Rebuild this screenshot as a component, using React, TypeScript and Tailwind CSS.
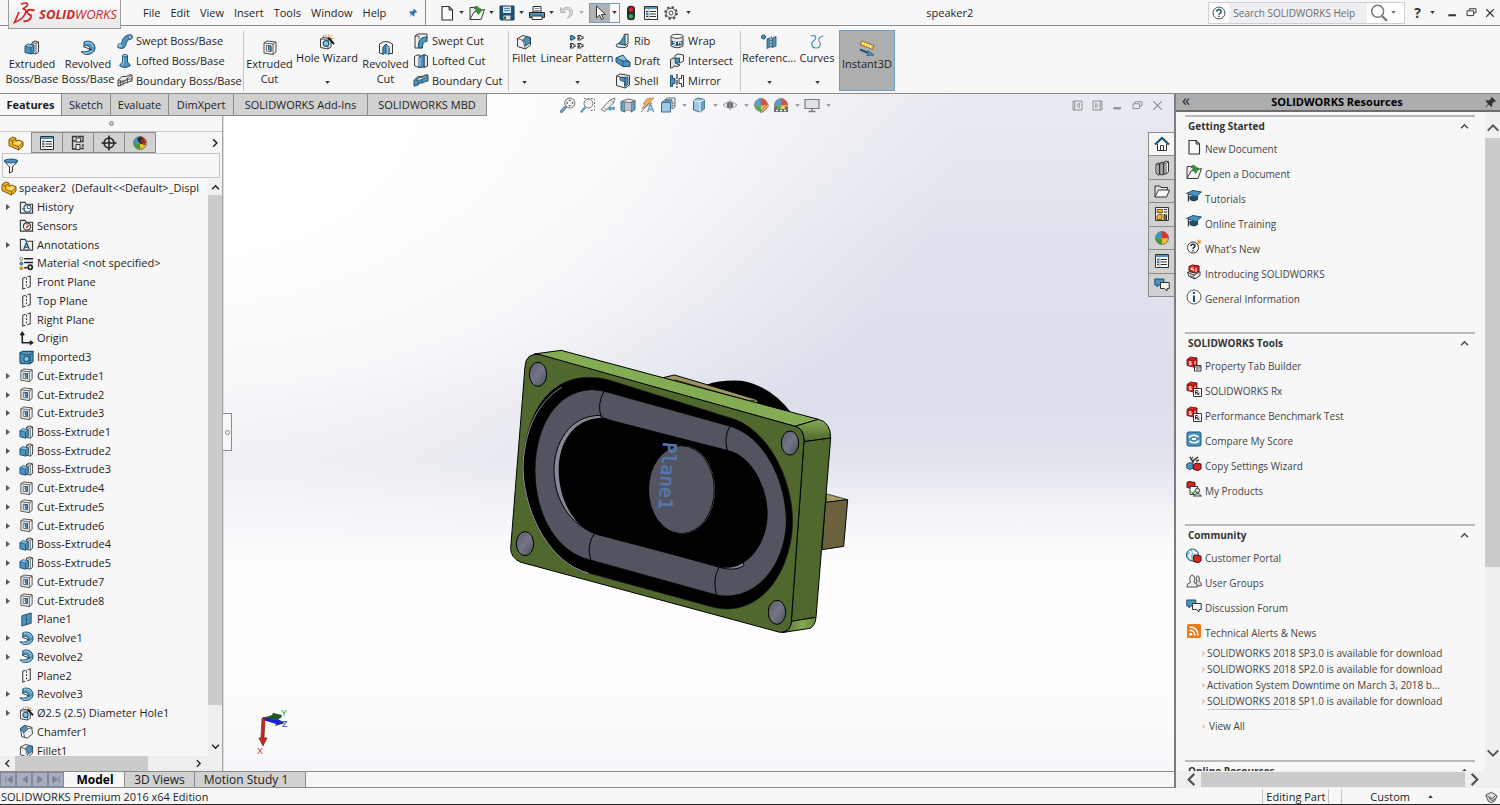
import React, { ReactNode } from "react";

const K = "#3b3b3b";
const B = "#4f93bd";
const L = "#8fc3e0";
const D = "#1d5273";

const sphere = (
  <>
    <circle cx="8" cy="8" r="6.4" fill="#e8c32f" stroke="#555" strokeWidth=".8" />
    <path d="M8 1.6A6.4 6.4 0 0 0 1.6 8L8 8.6Z" fill="#3d8fc7" />
    <path d="M8 1.6A6.4 6.4 0 0 1 14.4 8L8 8.6Z" fill="#d8322a" />
    <path d="M1.6 8A6.4 6.4 0 0 0 8 14.4V8.6Z" fill="#3e9b45" />
  </>
);
const cube = (
  <>
    <path d="M1 3.5 4.5 1 11 2v7l-3.5 2L1 9.5Z" fill="#d3271f" stroke="#5d0d0a" strokeWidth=".8" />
    <path d="M1 3.5 7.5 4.500 11 2M7.500 4.500V11" fill="none" stroke="#6d100d" strokeWidth=".8" />
    <path d="M5.500 5.800H3.300v1.300h2v1.500H3M9 5v3.500" fill="none" stroke="#fff" strokeWidth=".9" />
  </>
);
const folder = <path d="M1.500 14V2.500h5l1 2h7V14Z" fill="#eee" stroke={K} strokeWidth="1.200" />;
const planeOutline = (
  <>
    <path d="M4 3.500 7 2.500M9 2 12 1v11.500L9 13.500M7 14l-3 1V3.500" fill="none" stroke={K} strokeWidth="1.100" />
    <path d="M8 3v10.500" stroke={K} strokeWidth="1.100" strokeDasharray="2 1.500" />
  </>
);

const icons: Record<string, ReactNode> = {
  bossExtrude: (
    <>
      <path d="M8 2.500 11 1l3.500 1v10L12 14 8 13Z" fill="#f4f4f4" stroke={K} />
      <path d="M12 3.500V14M12 3.500l2.500-1.500M12 3.500 8 2.500" stroke={K} fill="none" strokeWidth=".8" />
      <path d="M1 6 4 4l6 1v7l-3 2-6-1.500Z" fill={B} stroke={D} />
      <path d="M1 6 7 7.500 10 5M7 7.500V14" fill="none" stroke={D} strokeWidth=".8" />
      <path d="M1.800 5.900 4 4.600l5 .8L7 6.900Z" fill={L} />
    </>
  ),
  cutExtrude: (
    <>
      <path d="M2 3 5 1l9 1v10l-3 2.500L2 13Z" fill="#f1f1f1" stroke={K} strokeWidth=".9" />
      <path d="M2 3 11 4 14 2M11 4v10.500" fill="none" stroke={K} strokeWidth=".8" />
      <path d="M4.500 5.500 9 6v5.500L4.500 11Z" fill="#fff" stroke={K} strokeWidth=".8" />
      <path d="M6.500 6H9v5L6.500 9.500Z" fill={B} stroke={D} strokeWidth=".8" />
    </>
  ),
  revolve: (
    <>
      <path d="M4 2C9-.5 15 2.500 15 8c0 5-6 7.500-11 6L1 11.500c3 .5 8 .5 9-2.500C10 6 7 5 4 6Z" fill={B} stroke={D} />
      <path d="M5 3c4-1.500 7.500.5 8 4M3.500 12.800c4 .7 8-.5 9.500-3.300" fill="none" stroke={L} strokeWidth="1.500" />
      <path d="M3 6.500 12 10" stroke="#222" strokeWidth=".9" />
    </>
  ),
  sweep: (
    <>
      <path d="M3 13C9 15 5 4 13 4" fill="none" stroke={D} strokeWidth="5.500" strokeLinecap="round" />
      <path d="M3 13C9 15 5 4 13 4" fill="none" stroke={B} strokeWidth="4" strokeLinecap="round" />
      <ellipse cx="3" cy="12.500" rx="2" ry="1.500" fill={L} />
      <ellipse cx="13" cy="4" rx="1.800" ry="2.200" fill={L} stroke={D} strokeWidth=".6" />
    </>
  ),
  loft: (
    <>
      <path d="M5.500 2.500h5V9l3 3.500Q8 16.500 2.500 12.500L5.500 9Z" fill={B} stroke={D} />
      <path d="M6.500 3v7l-2 2.500" stroke={L} fill="none" strokeWidth="1.200" />
      <ellipse cx="8" cy="2.500" rx="2.500" ry="1.200" fill={L} stroke={D} strokeWidth=".7" />
    </>
  ),
  boundary: (
    <>
      <path d="M1 7C4 6 3 3 7 3.500S11 1 15 2v6c-3 0-4 2-7 2S5 13.500 1 13Z" fill="#ededed" stroke={K} />
      <path d="M1 7c2 1 3 1 5 1s4-3 9-6M6 8v4.500M3.500 7.500V13M10.500 5v5M1 10c5 0 9-4 14-4.500" fill="none" stroke={K} strokeWidth=".8" />
    </>
  ),
  boundaryCut: (
    <>
      <path d="M1 7C4 6 3 3 7 3.500S11 1 15 2v6c-3 0-4 2-7 2S5 13.500 1 13Z" fill={B} stroke={D} />
      <path d="M3 7c2-1 3-3 5-2.500s3-2 6-2l-1 2c-3 0-4 2-6 2.500Z" fill="#f3f3f3" stroke={K} strokeWidth=".7" />
      <path d="M5 8v4.500M9 6v3.500" stroke={D} strokeWidth=".8" />
    </>
  ),
  wizard: (
    <>
      <path d="M1.500 5 4 3.500l8 1V13l-3 2-7.500-1.500Z" fill="#f1f1f1" stroke={K} />
      <path d="m1.500 5 7.500 1 3-1.500M9 6v9" fill="none" stroke={K} strokeWidth=".7" />
      <circle cx="7" cy="9.500" r="2.800" fill={L} stroke={D} strokeWidth="1.200" />
      <path d="M9 3.500 15 10" stroke="#222" strokeWidth="2.200" />
      <path d="m4 1.500 1 1M7 .5v2M10 .5l-.5 1.500M12.500 1.500 11.500 3M14.500 4l-1.500.5" stroke="#df8a1c" strokeWidth="1.200" />
    </>
  ),
  revolveCut: (
    <>
      <path d="M1.500 4Q8-1 14.500 4v9.500H11V8L8 4.500 5 8v6L1.500 13Z" fill="#f0f0f0" stroke={K} />
      <path d="M5 14.500V7l3-3v9Z" fill={B} stroke={D} strokeWidth=".8" />
      <path d="M8 4v9l3 1.500V7Z" fill={L} stroke={D} strokeWidth=".8" />
    </>
  ),
  sweptCut: (
    <>
      <path d="M2 3 5 1h9v4L9 8v7H2Z" fill="#efefef" stroke={K} />
      <path d="M5.500 14.500C5 8 7 4 14 4v4.500C10 8.500 9.500 11 9.500 15Z" fill={B} stroke={D} />
      <path d="M2 3h4M6 3v3" stroke={K} strokeWidth=".8" />
    </>
  ),
  loftedCut: (
    <>
      <path d="M1.500 3.500 4 2h3v12H4l-2.500-1.500Z" fill="#f0f0f0" stroke={K} />
      <path d="M11 1.500 14.500 3v10L11 14.500Z" fill="#e2e2e2" stroke={K} />
      <path d="M6 4 11 1.500V14L6 14.500Z" fill={B} stroke={D} />
      <path d="M7 5v8" stroke={L} strokeWidth="1.500" />
    </>
  ),
  fillet: (
    <>
      <path d="M1.500 4.500 7 1.500l7.500 2V11l-5 4-8-2.500Z" fill="#f1f1f1" stroke={K} />
      <path d="M7 6.500C7 4 10 2.500 14 3.500V9L9.500 12C9.500 9 9 7 7 6.500Z" fill={B} stroke={D} strokeWidth=".8" />
      <path d="M1.500 4.500 7 6.500 9.500 15" fill="none" stroke={K} strokeWidth=".8" />
    </>
  ),
  pattern: (
    <>
      <path d="M1.500 1.500h2.300Q4 3 6 3v1.500Q4 4.500 3.800 6H1.500Z" fill={B} stroke={D} />
      <path d="M9 1.500h2.500Q11.700 3 14 3v1.500q-2.300 0-2.500 1.500H9V4.500h1.300V3H9ZM1.500 9.500h2.300Q4 11 6 11v1.500q-2 0-2.200 1.500H1.500v-1.500h1V11h-1ZM9 9.500h2.500q.2 1.500 2.500 1.500v1.500q-2.300 0-2.500 1.500H9v-1.500h1.300V11H9Z" fill="#fff" stroke="#333" strokeWidth="1.100" />
    </>
  ),
  rib: (
    <>
      <path d="M1 12 4 10l7 1 2 2-3 1.500L2 14Z" fill="#f4f4f4" stroke={K} />
      <path d="M9 1.500 13 1v9.500l-3 2Z" fill="#e9e9e9" stroke={K} />
      <path d="M3.500 11C6 9 7 5 10 2.500V12Z" fill={B} stroke={D} />
    </>
  ),
  draft: (
    <>
      <path d="M1 5 8 2l3 4 4 3v4.500H8L1 9Z" fill={B} stroke={D} />
      <path d="M1 5 8 8l7 1M8 8v5.500" fill="none" stroke={D} strokeWidth=".8" />
      <path d="M2.500 5 8 2.700l3 4.300-3 .2Z" fill={L} />
    </>
  ),
  shell: (
    <>
      <path d="M1.500 3 5 1l9.500 1.500V12L10 15 1.500 12.500Z" fill="#f0f0f0" stroke={K} />
      <path d="M5 4.500 13 4v7.500L9.500 13V9L5 7Z" fill={B} stroke={D} strokeWidth=".8" />
      <path d="M1.500 3 10 5v10" fill="none" stroke={K} strokeWidth=".8" />
    </>
  ),
  wrap: (
    <>
      <path d="M2 3.500v9.500Q8 16.500 14 13V3.500" fill="#ececec" stroke={K} />
      <ellipse cx="8" cy="3.300" rx="6" ry="2" fill="#fff" stroke={K} />
      <path d="M2.500 7.500Q8 10 13.500 7.500v4.200Q8 14 2.500 11.700Z" fill={D} />
      <path d="M4 9.300h2.500v2H4M9.500 11.300V9.200h2.500v2" stroke="#fff" fill="none" />
    </>
  ),
  intersect: (
    <>
      <path d="M6 2.500 9 1l5.500 1v6L11 10 6 8.500Z" fill="#f2f2f2" stroke={K} />
      <path d="M1.500 6.500 4 5l4 .5V11l3 1-2 1.500-4-.5-1.500 2H1.500Z" fill="#ddd" stroke={K} />
      <path d="M6 5.500 10.500 5v4.500l-4 1Z" fill={B} stroke={D} />
    </>
  ),
  mirror: (
    <>
      <path d="M1.500 2.500h2v3h2.500v5H3.500v3h-2Z" fill={B} stroke={D} />
      <path d="M8 1v14" stroke="#222" strokeWidth="1.100" strokeDasharray="5 1" />
      <path d="M14.500 2.500h-2v3H10v5h2.500v3h2Z" fill="#fff" stroke="#333" />
    </>
  ),
  reference: (
    <>
      <circle cx="2.500" cy="3" r="2" fill={B} stroke={D} />
      <path d="M6 5 9 4v9l-3 1.500ZM11.500 4 15 2.500V12l-3.500 1.500Z" fill={B} stroke={D} strokeWidth=".8" />
      <path d="M10.300 2.500v12" stroke="#333" strokeDasharray="2 1" />
    </>
  ),
  curves: <path d="M1.500 2C8 0 7.500 5 4.500 7s-2 7 2.500 7 5-4 3.500-6-1-6 4-6" fill="none" stroke={B} strokeWidth="1.200" />,
  instant: (
    <>
      <path d="M1 4.500 3 1l12 4.500-1.500 4Z" fill="#f3c83d" stroke="#8a5a12" strokeWidth=".8" />
      <path d="m4 2 .0 2.500M6.500 3v2.500M9 4v2.500M11.500 5v2.500" stroke="#fff" />
      <path d="m1 9.500 9.500 4" stroke={D} strokeWidth="2" />
      <path d="m9 10.500 6 4.500-7 .5Z" fill={B} stroke={D} strokeWidth=".7" />
    </>
  ),
  newDoc: (
    <>
      <path d="M3 1.500h7L13.500 5v10H3Z" fill="#fafafa" stroke="#333" strokeWidth="1.100" />
      <path d="M10 1.500V5h3.500" fill="none" stroke="#333" />
    </>
  ),
  open: (
    <>
      <path d="M1 14.500V2.500h4l1 1.500h6V7" fill="#eee" stroke={K} />
      <path d="M1 14.500 5 7l10.500-2.500L12 14.500Z" fill="#f6f6f6" stroke={K} />
      <path d="M5 2.500c2-2 5-1.500 5.500 2.500H13L9.500 9.500 6.500 5h2C8 3.500 7 3 5 2.500Z" fill="#2f9c2f" stroke="#17631a" strokeWidth=".5" />
    </>
  ),
  save: (
    <>
      <path d="M1 1h14v14H2l-1-1Z" fill={D} stroke="#163b54" />
      <path d="M4 1.500h8V8H4Z" fill="#cfe2ee" />
      <path d="M5 3.500h6M5 5.500h6" stroke={B} />
      <path d="M4.500 10.500h7v4h-7Z" fill="#ddd" />
      <path d="M6 11.500v2.500" stroke="#222" strokeWidth="1.500" />
    </>
  ),
  print: (
    <>
      <path d="M4 7V1.500h8V7Z" fill="#fff" stroke="#333" />
      <path d="M5.500 3.500h5M5.500 5.500h5" stroke="#888" />
      <path d="M.500 7.500h15v5H.500Z" fill={B} stroke="#222" />
      <path d="M3 11h10v3.500H3Z" fill="#fff" stroke="#333" />
    </>
  ),
  undo: <path d="M1.500 2.500v5h5l-2-2c3-2 6.500-1 6.500 2.500 0 2-1 3.500-3 5 4-1 6-3.500 5.500-6.500C13 2.500 7.500.500 3.500 4.200Z" fill="#d7d7d7" stroke="#a9a9a9" strokeWidth=".8" />,
  cursor: <path d="M4.500 1v12l3-3 2 4.500 2-1L9.500 9.500h4Z" fill="#fff" stroke="#333" />,
  light: (
    <>
      <rect x="4" y=".8" width="8" height="14.400" rx="3.500" fill="#2c2c2c" />
      <circle cx="8" cy="4.500" r="2.200" fill="#e0271f" />
      <circle cx="8" cy="11.300" r="2.200" fill="#3aa840" />
    </>
  ),
  list: (
    <>
      <path d="M1.500 1.500h13v13h-13Z" fill="#fff" stroke="#333" />
      <path d="M2 3h12" stroke={B} strokeWidth="2" />
      <path d="M3 6.500h2M3 9h2M3 11.500h2" stroke={D} strokeWidth="1.500" />
      <path d="M6.500 6.500h6.500M6.500 9h6.500M6.500 11.500h6.500" stroke="#333" />
      <path d="M5.800 4v10" stroke="#777" strokeWidth=".6" />
    </>
  ),
  gear: (
    <>
      <circle cx="8" cy="8" r="6" fill="none" stroke="#444" strokeWidth="1.600" strokeDasharray="2.400 2.300" />
      <circle cx="8" cy="8" r="4.800" fill="#f7f7f7" stroke="#444" />
      <circle cx="8" cy="8" r="2" fill="#fff" stroke="#444" />
    </>
  ),
  zoomFit: (
    <>
      <path d="m1.500 14.500 4-4.500" stroke={D} strokeWidth="3" strokeLinecap="round" />
      <path d="m1.500 14.500 4-4.500" stroke={B} strokeWidth="2" strokeLinecap="round" />
      <circle cx="9.800" cy="6" r="5" fill="#f4f4f4" stroke="#555" />
      <path d="M9.800 2.200 11.300 4h-3ZM9.800 9.800 11.300 8h-3ZM6 6l1.800-1.500v3ZM13.600 6l-1.800-1.500v3Z" fill="#444" />
    </>
  ),
  zoomArea: (
    <>
      <path d="M4 1.500h10.500v12H9" fill="none" stroke="#666" strokeDasharray="2 1.500" />
      <path d="m1.500 14.500 4-4.500" stroke={B} strokeWidth="2.600" strokeLinecap="round" />
      <circle cx="8.500" cy="6.500" r="4.500" fill="#f0f3f6" stroke="#666" />
    </>
  ),
  prevView: (
    <>
      <path d="M1 12.500 10 3l5-2-1.500 5L5 14.500Z" fill="#eee" stroke="#666" />
      <path d="M4 10.500 7 13M10 3l3.500 3" stroke="#666" strokeWidth=".8" />
      <path d="M7 11.500 10.500 8.500V10H15v3h-4.500v1.500Z" fill={B} />
    </>
  ),
  section: (
    <>
      <path d="M1 4.500 5 5v10l-4-1.500Z" fill={B} stroke={D} />
      <path d="M11 5.500 15 3.500v9L11 15Z" fill={B} stroke={D} />
      <path d="M5 5h6v8.500H5Z" fill="#d9dde0" stroke="#777" strokeWidth=".7" />
      <path d="M1 4.500 8 2l7 1.500L11 5.500 5 5Z" fill="#ededed" stroke="#555" />
      <path d="M7 6v7M9 6v7" stroke="#888" strokeWidth=".8" />
    </>
  ),
  annot: (
    <>
      <path d="M7 1.500 14 1 9 6h3L2 12l3-5H3Z" fill="#eba14a" stroke="#a7682a" strokeWidth=".7" />
      <path d="M1 15 9 6" stroke="#666" />
      <path d="m7.500 15 3-8 3 8M8.500 12.500h4" fill="none" stroke={B} strokeWidth="1.500" />
    </>
  ),
  viewOri: (
    <>
      <path d="M5 3 7 1h8v9l-3 2V3Z" fill="#f3f3f3" stroke="#555" />
      <path d="M1.500 5.500h9V15h-9Z" fill={L} stroke={D} />
      <path d="m1.500 5.500 3-2.500H12l-1.500 2.500ZM12 6h3M12 8.500h3" fill={B} stroke={D} strokeWidth=".7" />
    </>
  ),
  display: (
    <>
      <path d="M2.500 3.500 7 1l6.500 1.500V12L9 15l-6.500-2Z" fill={L} stroke={D} />
      <path d="M9 5v10l4.500-3V2.500Z" fill={B} />
      <path d="M2.500 3.500 9 5l4.500-2.500M9 5v10" fill="none" stroke="#f6f6f6" />
    </>
  ),
  eye: (
    <>
      <path d="M1 8Q8 1.500 15 8 8 14.500 1 8Z" fill="#eee" stroke="#888" />
      <circle cx="8" cy="8" r="3.200" fill="#555" />
      <path d="M8 2.500v11" stroke="#999" />
    </>
  ),
  sphere,
  spherePen: (
    <>
      {sphere}
      <path d="m8 14 6-7 2 1.500-6 6.500-2.500.5Z" fill="#e8a55a" stroke="#7a4516" strokeWidth=".7" />
    </>
  ),
  sphereFloor: (
    <>
      {sphere}
      <path d="M1 15V10l3-1v3h8V9l3 1v5Z" fill="#555" />
      <path d="M3 13.500h2M7 13.500h2M11 13.500h2" stroke="#fff" strokeWidth="1.500" />
    </>
  ),
  sphereTree: (
    <>
      {sphere}
      <path d="M5 4 8 1.500l3 2L13.500 10 8 8.500Z" fill="#2b2b2b" />
      <path d="M9.500 4.500 12 9.500" stroke="#d8322a" strokeWidth="1.500" />
    </>
  ),
  monitor: (
    <>
      <path d="M1 2.500h14v9H1Z" fill="#dfe2e5" stroke="#666" strokeWidth="1.200" />
      <path d="M8 12v2.500M4.500 14.500h7" stroke="#666" strokeWidth="1.500" />
    </>
  ),
  part: (
    <>
      <path d="M1 4.500 4.500 2 8 3.200v3L10.500 5l4.500 2v4L10.500 15 1 10.500Z" fill="#efb428" stroke="#7b5206" />
      <path d="m1 4.500 3.500 1.300v3.700l6 2.200L15 7.500M10.500 11.700V15M4.500 5.800 8 3.500" fill="none" stroke="#7b5206" strokeWidth=".8" />
      <path d="m5 9 3-2 2.500-1L14 7.500l-3.500 3Z" fill="#fbdb72" />
    </>
  ),
  config: (
    <>
      <path d="M2.500 1v13h4M2.500 6h3M2.500 1.500h5" fill="none" stroke="#333" strokeWidth="1.300" />
      <path d="M6 3h4.500v4H6ZM6 9.500h4v5H6Z" fill="#eee" stroke="#333" />
      <path d="M8 1.500h5v5h-2.500M13 9v3M10.500 13.500H14" fill="none" stroke="#333" strokeWidth="1.300" />
    </>
  ),
  target: (
    <>
      <circle cx="8" cy="8" r="5" fill="none" stroke="#222" strokeWidth="1.500" />
      <path d="M8 .5v15M.5 8h15" stroke="#222" strokeWidth="1.500" />
    </>
  ),
  filter: (
    <>
      <path d="M1.500 3.500 6.500 9v6l3-1.500V9l5-5.500Z" fill="#eee" stroke="#333" />
      <ellipse cx="8" cy="3" rx="6.800" ry="1.900" fill={B} stroke={D} />
    </>
  ),
  history: (
    <>
      {folder}
      <circle cx="9" cy="9" r="3.800" fill="#fff" stroke={D} strokeWidth="1.100" />
      <path d="M9 6.500V9h2.500M3 8.500l2 2 1.500-2" fill="none" stroke={D} />
    </>
  ),
  sensor: (
    <>
      {folder}
      <circle cx="8.500" cy="9" r="3.800" fill="#fff" stroke="#333" strokeWidth="1.100" />
      <path d="M6.500 8a3 3 0 0 1 3-1.500" fill="none" stroke={B} />
      <path d="m7.500 10.500 3-3" stroke="#d4471d" strokeWidth="1.800" />
    </>
  ),
  annotations: (
    <>
      {folder}
      <path d="m5 13 3-7 3 7M6 10.800h4" fill="none" stroke={D} strokeWidth="1.400" />
    </>
  ),
  material: (
    <>
      <circle cx="2.500" cy="3" r="1.600" fill="#fff" stroke="#555" strokeWidth=".8" />
      <circle cx="2.500" cy="8" r="1.600" fill={B} stroke={D} strokeWidth=".8" />
      <circle cx="2.500" cy="13" r="1.600" fill="#f0b223" stroke="#96690d" strokeWidth=".8" />
      <path d="M5.500 3H15M5.500 7H15M5.500 12.500H9" stroke="#222" strokeWidth="1.600" />
      <circle cx="12" cy="12" r="2.200" fill="#fff" stroke="#222" strokeWidth="1.800" />
    </>
  ),
  plane: planeOutline,
  planeBlue: (
    <>
      <path d="M3 4 13 1v11L3 15Z" fill={B} stroke={D} />
      <path d="M8 2.500v11" stroke={D} strokeWidth="1.200" strokeDasharray="3 1" />
    </>
  ),
  origin: <path d="M3.500 2v10.500H14M1.500 4.500l2-3 2 3M11.500 10.500l3 2-3 2" fill="none" stroke="#222" strokeWidth="1.700" />,
  imported: (
    <>
      <path d="M1 3 4 1.500h11V12l-3 2.500H2L1 13Z" fill={B} stroke={D} strokeWidth="1.200" />
      <path d="M1 3.500 4 5h8l3-3M12 5v9" fill="none" stroke={D} />
      <circle cx="8" cy="9.500" r="2.800" fill={L} stroke={D} strokeWidth="1.200" />
    </>
  ),
  chamfer: (
    <>
      <path d="M1.500 5 6 1.500l7.500 2 1 7L9 15l-6-1.500Z" fill="#f1f1f1" stroke={K} />
      <path d="M1.500 5 6 1.500 9.500 5 5 9.500Z" fill={B} stroke={D} />
      <path d="m5 9.500 1 4.500M9.500 5l5-1" stroke={K} strokeWidth=".7" />
    </>
  ),
  home: (
    <>
      <path d="M3.500 8v6.500h9V8" fill="#fff" stroke="#333" />
      <path d="M1 8.500 8 2l7 6.500" fill="none" stroke={D} strokeWidth="2.200" />
      <path d="M6.500 14V9.500h3V14" fill="none" stroke="#333" />
    </>
  ),
  library: (
    <>
      <path d="M2 4.500 4 3l2 .5v11l-2 .5-2-2ZM5.500 3.500 8 2l2 .500V14l-2 1-2.500-1ZM9.500 2.500 12 1l2.500.800V12L12 14H9.500Z" fill="#f2f2f2" stroke="#333" />
      <path d="M4 5v10M8 4v11M12 3.500V14M2 4.500 4 5l2-1.500M5.500 3.500 8 4l2-1.500M9.500 2.500l2.500 1 2.500-1.700" stroke="#333" strokeWidth=".8" fill="none" />
    </>
  ),
  folderOpen: (
    <>
      <path d="M1 14V3h5l1 1.500h6.500V7" fill="#ddd" stroke="#333" />
      <path d="M1 14 4.500 7H15.500L12.500 14Z" fill="#fafafa" stroke="#333" />
    </>
  ),
  palette: (
    <>
      <path d="M1.500 1.500h13v13h-13Z" fill="#eee" stroke="#333" />
      <path d="M3 3.500h5.500v3H3ZM3 10l2-2h3v5.500H3Z" fill="#efb428" stroke="#6d4a07" strokeWidth=".8" />
      <path d="M10 3.500h3M10 6h3M10 8.500h1.200v5H10ZM12.500 8.500V14" stroke="#333" fill="#efb428" />
    </>
  ),
  chat: (
    <>
      <path d="M.8 2h9v6H5L3 10V8H.8Z" fill={B} stroke={D} />
      <path d="M6.500 5.500h8.700v6H13v2.500L10.500 11.500h-4Z" fill="#f4f4f4" stroke="#333" />
    </>
  ),
  cap: (
    <>
      <path d="M4 7v3.500q4 3 7.500 0V7" fill={D} stroke="#173b52" />
      <path d="M.5 4.500 7 1.500 15.500 3 10 7.500Z" fill={B} stroke={D} />
      <path d="M2.500 5.500v7" stroke="#333" strokeWidth="1.300" />
    </>
  ),
  whatsNew: (
    <>
      <circle cx="7" cy="8.500" r="5.500" fill="#fff" stroke="#333" />
      <path d="M5 7c0-2.500 4-2.500 4 0 0 1.500-2 1.300-2 3M7 11v1.300" fill="none" stroke="#222" strokeWidth="1.500" />
      <path d="M13 .5v5M10.500 3h5M11.300 1.300l3.400 3.400M14.700 1.300l-3.400 3.400" stroke="#ea8c1b" strokeWidth=".9" />
    </>
  ),
  intro: (
    <>
      <path d="M3 2.500 6.500 1 13 2v5l-4 2-6-1.500Z" fill="#d3271f" stroke="#5d0d0a" />
      <path d="M7.500 4H5v1.500h2.500V7M10 4v4" fill="none" stroke="#fff" />
      <path d="M1.500 8 4 9.500l4 1.500 6-3.500v4L9 15l-6-2.500Z" fill="#eee" stroke="#333" />
      <path d="M8 11v4M4 11.500 7 13" stroke="#333" strokeWidth=".8" />
    </>
  ),
  info: (
    <>
      <circle cx="8" cy="8" r="7" fill="#fff" stroke="#555" />
      <path d="M8 3v2M8 6.500V13" stroke={D} strokeWidth="2.200" />
    </>
  ),
  cubeTab: (
    <>
      {cube}
      <path d="M8.500 9.500h6.500v5.500H8.500Z" fill="#fff" stroke="#333" />
      <path d="M8.500 11h6.500M10 13h3.500" stroke="#333" />
    </>
  ),
  cubeRx: (
    <>
      {cube}
      <path d="M7.500 7.500h8V15.500h-8Z" fill="#fff" stroke="#333" />
      <path d="M9.500 13.500v-4h2q1.200 1 0 2h-2l4 2.500M13.500 11.500l-2 2.500" fill="none" stroke="#222" strokeWidth=".9" />
    </>
  ),
  compare: (
    <>
      <rect x="1" y="1" width="14" height="14" rx="1.500" fill={B} stroke={D} />
      <path d="M3 6.500c2-3 7-3 9.500-.5M13 9.500c-2 3-7 3-9.500.5" fill="none" stroke="#fff" strokeWidth="1.600" />
      <path d="M6 8h4" stroke="#fff" strokeWidth="2" />
    </>
  ),
  copySet: (
    <>
      <path d="M.8 8 4 6.500l3 1V12l-3 1.500L.800 12Z" fill={B} stroke={D} />
      <path d="M7.500 8.500 10.500 7l4.500 1v5l-3 1.500-4.500-1Z" fill="#d3271f" stroke="#5d0d0a" />
      <path d="M4 1l3 5 1-2 4-3M6 1.500h1M10 5l3-1" fill="none" stroke="#333" strokeWidth="1.500" />
    </>
  ),
  products: (
    <>
      <path d="M1 1.500 3 .5l6 1v5l-3 1-5-1Z" fill="#d3271f" stroke="#5d0d0a" />
      <path d="M4 5.500h7.500V13.500H4Z" fill="#fff" stroke="#333" />
      <path d="m5.500 11 1.500 1.500 2-2.500" fill="none" stroke="#2f9c2f" strokeWidth="1.300" />
      <circle cx="11.500" cy="9.500" r="2.200" fill="#ddd" stroke="#444" />
      <path d="M7.500 15q4-5 8 0Z" fill="#ddd" stroke="#444" />
    </>
  ),
  portal: (
    <>
      <circle cx="6.500" cy="7" r="6" fill={L} stroke={D} />
      <path d="M3 3c3 1 2 3 0 5l2 3M8 2c-2 2 1 3 3 3" fill="none" stroke="#fff" strokeWidth="1.800" />
      <path d="M7.500 8 10 7l5 1v5l-3 1.800-4.500-1.300Z" fill="#d3271f" stroke="#5d0d0a" />
    </>
  ),
  users: (
    <>
      <path d="M8 13.500q.5-4 3-4.500-2-5 .5-6 3 .2 1.500 5 2.500 1 2.500 4.500Z" fill="#d8d8d8" stroke="#555" />
      <path d="M.8 14q0-4 3.700-4.500Q2.500 3.500 6 2q4 1 2 7.500Q11.500 10 11.500 14Z" fill="#efefef" stroke="#555" />
    </>
  ),
  rss: (
    <>
      <rect x="1" y="1" width="14" height="14" rx="1.500" fill="#ea7a1d" />
      <circle cx="4.700" cy="11.300" r="1.400" fill="#fff" />
      <path d="M3.500 7.300q5 0 5.200 5.200M3.500 4q8.300 0 8.500 8.500" fill="none" stroke="#fff" strokeWidth="1.500" />
    </>
  ),
  help: (
    <>
      <circle cx="8" cy="8" r="6.800" fill="#fff" stroke="#333" />
      <path d="M5.500 6.500c0-3.500 5-3.500 5 0 0 2-2.500 1.500-2.500 3.500M8 11v1.600" fill="none" stroke={D} strokeWidth="1.700" />
    </>
  ),
  search: (
    <>
      <circle cx="6.800" cy="6.500" r="5.300" fill="none" stroke="#777" strokeWidth="1.300" />
      <path d="m10.500 10.500 4.500 4.500" stroke="#777" strokeWidth="2" />
    </>
  ),
  pin: <path d="m9.500 1 5.500 5.500-1.500.5-.8-.3-2.700 2.800.3 3-1.300 1-3-3L1 15l4-5.500-3-3 1-1.200 3 .3L9 3l-.3-1Z" fill="currentColor" />,
  min: <path d="M2 12h11" stroke="currentColor" strokeWidth="3" />,
  restore: <path d="M5 5V2.500h9.500v6H11M1.500 5.500H11v7H1.500Z" fill="none" stroke="currentColor" strokeWidth="1.400" />,
  close: <path d="m2 2 12 12M14 2 2 14" stroke="currentColor" strokeWidth="1.700" />,
  dockL: <path d="M1.500 1.500h13v13h-13ZM4 1.500v13M10.500 4.500 7 8l3.500 3.500Z" fill="none" stroke="currentColor" strokeWidth="1.400" />,
  dockR: <path d="M1.500 1.500h13v13h-13ZM12 1.500v13M5.500 4.500 9 8l-3.500 3.500Z" fill="none" stroke="currentColor" strokeWidth="1.400" />,
  up: <path d="m2 11 6-6 6 6" fill="none" stroke="currentColor" strokeWidth="2.400" />,
  down: <path d="m2 5 6 6 6-6" fill="none" stroke="currentColor" strokeWidth="2.400" />,
  left: <path d="M11 2 5 8l6 6" fill="none" stroke="currentColor" strokeWidth="2.400" />,
  right: <path d="m5 2 6 6-6 6" fill="none" stroke="currentColor" strokeWidth="2.400" />,
  tag: (
    <>
      <path d="M1 5 8 1.500 15 6l-3 6-4 2.500-4-2Z" fill="#ddd" stroke="#333" />
      <path d="m3 6.500 6 3 4-4M5 9l4 3 4-3" fill="none" stroke="#333" />
    </>
  ),
};

const Icon = ({ n, c = "size-4" }: { n: string; c?: string }) => (
  <svg viewBox="0 0 16 16" className={`block shrink-0 ${c}`} aria-hidden="true">
    {icons[n]}
  </svg>
);
const Caret = ({ c = "text-[#333]" }: { c?: string }) => (
  <svg viewBox="0 0 6 4" className={`block h-[3px] w-[5px] shrink-0 ${c}`} aria-hidden="true">
    <path d="M0 0h6L3 4Z" fill="currentColor" />
  </svg>
);

const menus = ["File", "Edit", "View", "Insert", "Tools", "Window", "Help"];

function TitleBar() {
  return (
    <header className="relative flex h-[26px] shrink-0 items-center border-b border-[#8b8b8b] pl-[143px]">
      <div className="absolute top-0 left-2 z-10 flex h-[29px] w-[113px] items-center border border-t-0 border-[#9c9c9c] bg-linear-to-b from-[#fbfbfb] to-[#e9e9e9] pb-1 pl-1">
        <svg viewBox="0 0 22 23" className="h-[23px] w-[22px] shrink-0" aria-hidden="true">
          <path d="M8 3.200Q15 .5 14.500 4 13.500 6.500 9.500 7.800 14 8 12.500 12 10 18.500 1.500 21.500L6 11" fill="none" stroke="#d0282b" strokeWidth="1.700" />
          <path d="M21.500 9.500Q13.500 7.500 14 11.500 14.500 13 18 14.500 18.500 20 10.500 20.500" fill="none" stroke="#d0282b" strokeWidth="2" />
        </svg>
        <span className="pt-1 pl-1 text-[13px] leading-4 text-[#d0282b] italic"><b>SOLID</b>WORKS</span>
      </div>
      <nav className="flex gap-[10px]">
        {menus.map((m) => <button key={m}>{m}</button>)}
      </nav>
      <button aria-label="Pin menu" className="ml-[22px] text-[#2f74b5]"><Icon n="pin" c="size-[10px]" /></button>
      <div className="ml-[7px] flex h-[25px] items-center border-l border-[#8b8b8b] pl-[13px]">
        {["newDoc", "open", "save", "print", "undo"].map((n) => (
          <React.Fragment key={n}>
            <button aria-label={n}><Icon n={n} /></button>
            <span className="mr-[5px] ml-1"><Caret c={n === "undo" ? "text-[#aaa]" : "text-[#333]"} /></span>
          </React.Fragment>
        ))}
        <div className="flex h-5 items-center border border-[#6d9fc4]">
          <button aria-label="Select" className="flex h-full w-5 items-center justify-center bg-[#b0b2b4]"><Icon n="cursor" /></button>
          <button aria-label="Select options" className="flex h-full w-[9px] items-center justify-center"><Caret /></button>
        </div>
        <button aria-label="Rebuild" className="ml-[3px]"><Icon n="light" /></button>
        <button aria-label="File properties" className="ml-1"><Icon n="list" /></button>
        <button aria-label="Options" className="mr-[7px] ml-1"><Icon n="gear" /></button>
        <Caret />
      </div>
      <div className="flex-1 text-center">speaker2</div>
      <div className="flex h-[22px] w-[197px] items-center border border-[#cfcfcf] bg-white">
        <span className="px-[3px]"><Icon n="help" c="size-[14px]" /></span>
        <input aria-label="Search help" placeholder="Search SOLIDWORKS Help" className="h-full w-[138px] min-w-0 bg-[#edeff3] pl-1 text-[10px] placeholder:text-[#6d6d6d]" />
        <button aria-label="Search" className="mx-[3px]"><Icon n="search" c="size-[18px]" /></button>
        <Caret c="text-[#777]" />
      </div>
      <button aria-label="Help" className="ml-[9px] text-sm font-bold text-[#333]">?</button>
      <span className="ml-[9px]"><Caret /></span>
      <div className="mr-[5px] ml-[12px] flex gap-2 text-[#333]">
        <button aria-label="Minimize"><Icon n="min" c="size-[11px]" /></button>
        <button aria-label="Restore"><Icon n="restore" c="size-[11px]" /></button>
        <button aria-label="Close"><Icon n="close" c="size-[10px]" /></button>
      </div>
    </header>
  );
}

const Big = ({ n, lines, w }: { n: string; lines: string[]; w: string }) => (
  <button className={`flex h-full flex-col items-center pt-[9px] leading-[15px] whitespace-nowrap ${w}`}>
    <Icon n={n} />
    {lines.map((l) => <span key={l}>{l}</span>)}
  </button>
);
const Drop = ({ n, label, w }: { n: string; label: string; w: string }) => (
  <button className={`flex h-full flex-col items-center pt-[3px] pb-[7px] leading-[15px] whitespace-nowrap ${w}`}>
    <Icon n={n} />
    <span>{label}</span>
    <span className="mt-auto"><Caret /></span>
  </button>
);
const Stack = ({ items, w }: { items: [string, string][]; w: string }) => (
  <div className={`flex flex-col ${w}`}>
    {items.map(([n, l]) => (
      <button key={l} className="flex h-5 items-center gap-[3px] whitespace-nowrap"><Icon n={n} />{l}</button>
    ))}
  </div>
);

function Ribbon() {
  return (
    <div className="flex h-[68px] shrink-0 items-stretch border-b border-[#8b8b8b] pt-[5px] pb-0.5 pl-1">
      <Big n="bossExtrude" lines={["Extruded", "Boss/Base"]} w="w-14" />
      <Big n="revolve" lines={["Revolved", "Boss/Base"]} w="w-14" />
      <Stack w="w-[128px] border-r border-[#c4c4c4] pl-px" items={[["sweep", "Swept Boss/Base"], ["loft", "Lofted Boss/Base"], ["boundary", "Boundary Boss/Base"]]} />
      <Big n="cutExtrude" lines={["Extruded", "Cut"]} w="w-[51px]" />
      <Drop n="wizard" label="Hole Wizard" w="w-16" />
      <Big n="revolveCut" lines={["Revolved", "Cut"]} w="w-[53px]" />
      <Stack w="w-[97px] border-r border-[#c4c4c4] pl-px" items={[["sweptCut", "Swept Cut"], ["loftedCut", "Lofted Cut"], ["boundaryCut", "Boundary Cut"]]} />
      <Drop n="fillet" label="Fillet" w="w-[30px]" />
      <Drop n="pattern" label="Linear Pattern" w="w-[76px]" />
      <Stack w="w-[54px]" items={[["rib", "Rib"], ["draft", "Draft"], ["shell", "Shell"]]} />
      <Stack w="w-[72px] border-r border-[#c4c4c4]" items={[["wrap", "Wrap"], ["intersect", "Intersect"], ["mirror", "Mirror"]]} />
      <Drop n="reference" label="Referenc..." w="w-14" />
      <Drop n="curves" label="Curves" w="w-10" />
      <button className="-mt-px ml-0.5 flex w-14 flex-col items-center border border-[#6d9fc4] bg-[#adafaf] pt-[9px] leading-[15px]">
        <Icon n="instant" />
        Instant3D
      </button>
    </div>
  );
}

const tabs = ["Features", "Sketch", "Evaluate", "DimXpert", "SOLIDWORKS Add-Ins", "SOLIDWORKS MBD"];
const tabW = ["w-[61px]", "w-[49px]", "w-[58px]", "w-[65px]", "w-[134px]", "w-[120px]"];

function TabRow() {
  return (
    <div className="flex h-[22px] shrink-0 items-stretch">
      {tabs.map((t, i) => (
        <button key={t} className={`border-b border-[#8b8b8b] whitespace-nowrap ${tabW[i]} ${i === 0 ? "bg-[#f7f7f7] font-bold" : "border-l bg-[#d1d1d1]"} ${i === 5 ? "border-r" : ""}`}>{t}</button>
      ))}
      <div className="flex items-center gap-1 pl-[73px] opacity-85">
        {["zoomFit", "zoomArea", "prevView", "section", "annot"].map((n) => (
          <button key={n} aria-label={n}><Icon n={n} /></button>
        ))}
        {["viewOri", "display", "eye"].map((n) => (
          <button key={n} aria-label={n} className="flex items-center gap-1.5"><Icon n={n} /><Caret c="text-[#888]" /></button>
        ))}
        <button aria-label="Edit appearance"><Icon n="spherePen" /></button>
        <button aria-label="Apply scene" className="flex items-center gap-1.5"><Icon n="sphereFloor" /><Caret c="text-[#888]" /></button>
        <button aria-label="View settings" className="flex items-center gap-1.5"><Icon n="monitor" /><Caret c="text-[#888]" /></button>
      </div>
      <div className="ml-auto flex items-center gap-[9px] pr-[11px] text-[#8b8b8b]">
        {["dockL", "dockR", "min", "restore", "close"].map((n) => (
          <button key={n} aria-label={n}><Icon n={n} c="size-[11px]" /></button>
        ))}
      </div>
    </div>
  );
}

type Node = [string, string, boolean?];
const tree: Node[] = [
  ["history", "History", true], ["sensor", "Sensors"], ["annotations", "Annotations", true],
  ["material", "Material <not specified>"], ["plane", "Front Plane"], ["plane", "Top Plane"],
  ["plane", "Right Plane"], ["origin", "Origin"], ["imported", "Imported3"],
  ["cutExtrude", "Cut-Extrude1", true], ["cutExtrude", "Cut-Extrude2", true], ["cutExtrude", "Cut-Extrude3", true],
  ["bossExtrude", "Boss-Extrude1", true], ["bossExtrude", "Boss-Extrude2", true], ["bossExtrude", "Boss-Extrude3", true],
  ["cutExtrude", "Cut-Extrude4", true], ["cutExtrude", "Cut-Extrude5", true], ["cutExtrude", "Cut-Extrude6", true],
  ["bossExtrude", "Boss-Extrude4", true], ["bossExtrude", "Boss-Extrude5", true],
  ["cutExtrude", "Cut-Extrude7", true], ["cutExtrude", "Cut-Extrude8", true],
  ["planeBlue", "Plane1"], ["revolve", "Revolve1", true], ["revolve", "Revolve2", true],
  ["plane", "Plane2"], ["revolve", "Revolve3", true], ["wizard", "Ø2.5 (2.5) Diameter Hole1", true],
  ["chamfer", "Chamfer1"], ["fillet", "Fillet1"],
];

function FeatureTree() {
  return (
    <aside className="flex w-[223px] shrink-0 flex-col border-r border-[#a5a5a5] bg-[#f7f7f7]">
      <div className="flex h-4 shrink-0 items-center justify-center border-b border-[#c9c9c9]">
        <span className="size-[5px] rounded-full border border-[#888] bg-[#ccc]" />
      </div>
      <div className="flex h-[21px] shrink-0 items-stretch pl-px">
        {["part", "list", "config", "target", "sphereTree"].map((n, i) => (
          <button key={n} aria-label={n} className={`flex w-[31px] items-center justify-center ${i ? "border border-l-0 border-[#8b8b8b] bg-[#d1d1d1]" : "border-r border-[#8b8b8b]"}`}><Icon n={n} /></button>
        ))}
        <button aria-label="More tabs" className="mr-0.5 ml-auto"><Icon n="right" c="size-[10px]" /></button>
      </div>
      <label className="mx-0.5 mb-px flex h-[25px] shrink-0 items-center border border-[#c4c4c4]">
        <Icon n="filter" />
        <input aria-label="Filter features" className="min-w-0 flex-1 bg-transparent" />
      </label>
      <div className="flex min-h-0 flex-1">
        <ul className="min-h-0 flex-1 overflow-hidden">
          <li className="grid h-[581px] auto-rows-fr grid-cols-1 whitespace-nowrap">
            <div className="flex items-center gap-0.5 overflow-hidden pl-px"><Icon n="part" /><span className="whitespace-pre">speaker2  (Default&lt;&lt;Default&gt;_Displ</span></div>
            {tree.map(([n, l, x]) => (
              <div key={l} className="flex items-center gap-[3px]">
                <svg viewBox="0 0 4 6" className="mr-1.5 ml-1.5 h-[6px] w-1" aria-hidden="true">{x && <path d="M0 0v6l4-3Z" fill="#555" />}</svg>
                <Icon n={n} c="size-[15px]" />
                <span>{l}</span>
              </div>
            ))}
          </li>
        </ul>
        <div className="flex w-[14px] shrink-0 flex-col items-center bg-[#efefef]">
          <span className="flex h-4 items-center"><Icon n="up" c="size-[9px]" /></span>
          <div className="h-[510px] w-full bg-[#cbcbcb]" />
          <span className="mt-auto flex h-5 items-center"><Icon n="down" c="size-[9px]" /></span>
        </div>
      </div>
      <div className="flex h-[15px] shrink-0 items-center bg-[#efefef] pr-[19px]">
        <span className="px-[3px]"><Icon n="left" c="size-[9px]" /></span>
        <div className="h-full w-[133px] bg-[#cbcbcb]" />
        <span className="ml-auto"><Icon n="right" c="size-[9px]" /></span>
      </div>
    </aside>
  );
}

function Speaker() {
  return (
    <svg viewBox="0 0 1080 915" className="absolute top-[223px] left-[276px] h-[305px] w-[360px]" role="img" aria-label="speaker2 model">
      <defs>
        <linearGradient id="hole" x1="0" y1="0" x2="1" y2="1">
          <stop offset="0" stopColor="#585a68" /><stop offset=".5" stopColor="#747687" /><stop offset="1" stopColor="#4c4e5a" />
        </linearGradient>
        <linearGradient id="corner" x1="0" y1="0" x2="0" y2="1">
          <stop offset="0" stopColor="#86ac53" /><stop offset="1" stopColor="#4c6229" />
        </linearGradient>
        <linearGradient id="foot" x1="0" y1="0" x2="1" y2="0">
          <stop offset="0" stopColor="#55702f" /><stop offset=".6" stopColor="#83a850" /><stop offset="1" stopColor="#68873e" />
        </linearGradient>
      </defs>
      <path d="M620 137Q660 122 725 125Q815 142 876 224L700 200Z" fill="#000" />
      <path d="M485 117 523 108 773 182V194L740 190Z" fill="#9e9660" stroke="#000" strokeWidth="3" />
      <path d="M523 122 748 186 773 182" fill="none" stroke="#000" strokeWidth="2" />
      <path d="M978 464 1043 482 980 491Z" fill="#a69d64" stroke="#000" strokeWidth="2" />
      <path d="M976 490 1043 482 1031 622 966 632Z" fill="#6a623d" stroke="#000" strokeWidth="3" />
      <path d="M103 45 183 34 955 241 885 262Z" fill="#84ac54" stroke="#000" strokeWidth="3" strokeLinejoin="round" />
      <path d="M885 262 955 241Q992 249 992 297L912 308Q912 268 885 262Z" fill="url(#corner)" stroke="#000" strokeWidth="3" />
      <path d="M912 308 992 297 948 835 874 847Z" fill="#50672d" stroke="#000" strokeWidth="3" />
      <path d="M874 847 948 835Q946 860 930 868L845 881Q872 876 874 847Z" fill="url(#foot)" stroke="#000" strokeWidth="3" />
      <path d="M120 47Q78 40 75 82L32 628Q32 655 60 669L840 880Q873 878 874 847L912 305Q912 268 885 262Z" fill="#50672d" stroke="#000" strokeWidth="3" />
      <path d="M262 115C130 118 71 250 69 390C73 530 155 675 265 702L640 805C780 838 876 700 878 545C876 410 800 270 695 238L330 124Q300 114 262 115Z" fill="#000" stroke="#1a1c1e" strokeWidth="2" />
      <path d="M185 145C110 190 71 280 69 390C73 530 155 675 265 702" fill="none" stroke="#8a90a0" strokeWidth="3" />
      <path d="M275 152C170 155 106 260 105 395C106 530 170 638 268 662L650 768C765 790 857 680 859 545C857 420 790 290 688 261L312 157Q290 152 275 152Z" fill="#52545f" stroke="#000" strokeWidth="2" />
      <path d="M300 229C210 230 162 310 162 395C163 480 210 560 285 580L655 684C690 694 710 692 732 680L700 560L700 400L310 236Z" fill="#858797" stroke="#000" strokeWidth="3" />
      <path d="M306 236C220 238 176 310 176 395C177 480 220 566 292 588L668 686C745 694 803 610 803 525C802 440 755 350 682 333Z" fill="#000" />
      <path d="M312 157Q290 195 304 236M690 261Q670 295 682 333M285 580Q258 620 272 662M657 684Q636 725 650 767" fill="none" stroke="#000" strokeWidth="3" />
      <ellipse cx="548" cy="452" rx="97" ry="132" fill="#8c8fa1" />
      <ellipse cx="546" cy="452" rx="97" ry="131" fill="#52545f" stroke="#000" strokeWidth="3" />
      <ellipse cx="543" cy="452" rx="96" ry="130" fill="#52545f" />
      <g fill="url(#hole)" stroke="#000" strokeWidth="3">
        <ellipse cx="114" cy="106" rx="26" ry="36" />
        <ellipse cx="870" cy="312" rx="26" ry="36" />
        <ellipse cx="75" cy="614" rx="26" ry="36" />
        <ellipse cx="831" cy="820" rx="26" ry="36" />
      </g>
      <text transform="translate(490 308) rotate(94)" fontSize="56" fill="#5378ad" stroke="#5378ad" strokeWidth="2" fontFamily="DejaVu Sans Mono, monospace">Plane1</text>
    </svg>
  );
}

function Triad() {
  return (
    <svg viewBox="0 0 50 55" className="absolute bottom-3 left-[26px] h-[55px] w-[50px]" role="img" aria-label="Axes">
      <path d="M13 14 22 11l1-2 9 2-1 3-5 2Z" fill="#1f5a1c" />
      <path d="m13 13 14 3-1-2 9 5-10 3 1-2-13-4Z" fill="#1d22c8" />
      <path d="M12 14h3l-1 20h3l-4 8-4-8h2Z" fill="#c62b1d" stroke="#5f120b" strokeWidth=".6" />
      <g fontFamily="Liberation Sans, sans-serif" fontSize="9">
        <text x="31" y="12" fill="#2a9a2a">Y</text>
        <text x="32" y="23" fill="#2a3ee0">Z</text>
        <text x="7" y="50" fill="#d8382c">X</text>
      </g>
    </svg>
  );
}

const sideTabs = ["home", "library", "folderOpen", "palette", "sphere", "list", "chat"];

function Workspace() {
  return (
    <main className="flex min-w-0 flex-1 flex-col">
      <div className="flex min-h-0 flex-1 flex-col bg-[radial-gradient(ellipse_70%_66%_at_12%_4%,#ffffff_30%,#ffffffcc_60%,#ffffff66_80%,#ffffff00_100%),linear-gradient(to_bottom,#e9ebf2_0%,#dfe2ec_22%,#dcdfea_45%,#e1e4ed_54%,#f3f4f8_62%,#fefefe_70%,#fefefe_86%,#f6f7fa_100%)]">
        <TabRow />
        <div className="flex min-h-0 flex-1">
          <FeatureTree />
          <div className="relative min-w-0 flex-1 border-l border-[#d9dbe0]">
            <button aria-label="Collapse panel" className="absolute top-[297px] -left-px flex h-[38px] w-[9px] items-center justify-center border border-l-0 border-[#8b8b8b] bg-[#f7f7f7]">
              <span className="size-[5px] rounded-full border border-[#888]" />
            </button>
            <Speaker />
            <Triad />
            <nav className="absolute top-4 right-0 flex h-[165px] w-[26px] flex-col border border-r-0 border-[#8b8b8b] bg-[#d1d1d1]">
              {sideTabs.map((n, i) => (
                <button key={n} aria-label={n} className={`flex flex-1 items-center justify-center ${i === 0 ? "bg-[#f7f7f7]" : "border-t border-[#8b8b8b]"}`}><Icon n={n} /></button>
              ))}
            </nav>
          </div>
        </div>
      </div>
      <div className="flex h-[17px] shrink-0 items-stretch border-y border-[#8b8b8b] text-xs leading-[15px]">
        {["First", "Previous", "Next", "Last"].map((g, i) => (
          <button key={g} aria-label={g} className="flex w-4 items-center justify-center border border-[#8088a0] bg-[#a9adbd]">
            <svg viewBox="0 0 10 10" className="size-[9px]" aria-hidden="true">
              <path d={i === 0 ? "M2 1v8M9 1 4 5l5 4Z" : i === 1 ? "M8 1 3 5l5 4Z" : i === 2 ? "M2 1l5 4-5 4Z" : "M8 1v8M1 1l5 4-5 4Z"} fill="#7a82a0" stroke="#7a82a0" />
            </svg>
          </button>
        ))}
        <button className="w-[60px] pl-0.5 font-bold text-black">Model</button>
        <button className="w-[70px] border-l border-[#8b8b8b] bg-[#d1d1d1]">3D Views</button>
        <button className="w-[112px] border-x border-[#8b8b8b] bg-[#d1d1d1] pr-2">Motion Study 1</button>
      </div>
    </main>
  );
}

const sections: [string, [string, string][]][] = [
  ["Getting Started", [["newDoc", "New Document"], ["open", "Open a Document"], ["cap", "Tutorials"], ["cap", "Online Training"], ["whatsNew", "What's New"], ["intro", "Introducing SOLIDWORKS"], ["info", "General Information"]]],
  ["SOLIDWORKS Tools", [["cubeTab", "Property Tab Builder"], ["cubeRx", "SOLIDWORKS Rx"], ["cubeRx", "Performance Benchmark Test"], ["compare", "Compare My Score"], ["copySet", "Copy Settings Wizard"], ["products", "My Products"]]],
  ["Community", [["portal", "Customer Portal"], ["users", "User Groups"], ["chat", "Discussion Forum"], ["rss", "Technical Alerts & News"]]],
];
const news = [
  "SOLIDWORKS 2018 SP3.0 is available for download",
  "SOLIDWORKS 2018 SP2.0 is available for download",
  "Activation System Downtime on March 3, 2018 b...",
  "SOLIDWORKS 2018 SP1.0 is available for download",
];

const Bullet = () => (
  <svg viewBox="0 0 4 6" className="h-[5px] w-[3px] shrink-0" aria-hidden="true">
    <path d="m.5.5 2.500 2.500L.500 5.500" fill="none" stroke="#e07a1c" strokeWidth="1.300" />
  </svg>
);

const SectionHead = ({ title }: { title: string }) => (
  <div className="flex h-5 items-center justify-between border-t-2 border-[#b9b9b9] pr-1.5 pl-[3px]">
    <h2 className="font-bold text-[#333]">{title}</h2>
    <button aria-label={`Collapse ${title}`} className="text-[#444]"><Icon n="up" c="size-[9px]" /></button>
  </div>
);

function Resources() {
  return (
    <aside className="flex w-[326px] shrink-0 flex-col border-l-2 border-[#7d7d7d] bg-[#f7f7f7]">
      <div className="flex h-[18px] shrink-0 items-center border-b-2 border-[#6d6d6d] bg-[#abadaf] pr-[3px] pl-1.5">
        <button aria-label="Collapse" className="pb-1 text-base leading-4">«</button>
        <h1 className="flex-1 text-center font-bold text-black">SOLIDWORKS Resources</h1>
        <button aria-label="Pin" className="text-[#333]"><Icon n="pin" c="size-[13px]" /></button>
      </div>
      <div className="flex min-h-0 flex-1">
        <div className="flex min-w-0 flex-1 flex-col">
          <div className="min-h-0 flex-1 overflow-hidden pt-[3px] pr-2.5 pl-[9px] text-[10px] text-[#444]">
            {sections.map(([title, items]) => (
              <section key={title} className={title === "Community" ? "" : "pb-[22px]"}>
                <SectionHead title={title} />
                <ul>
                  {items.map(([n, l]) => (
                    <li key={l} className="h-[25px]">
                      <a href="#" className="flex h-full items-center gap-[3px] pl-px"><span className="pb-0.5"><Icon n={n} /></span><span className="pt-0.5">{l}</span></a>
                    </li>
                  ))}
                </ul>
              </section>
            ))}
            <ul className="pt-px pl-[17px] leading-4">
              {news.map((t) => (
                <li key={t}><a href="#" className="flex items-center gap-0.5 whitespace-nowrap"><Bullet />{t}</a></li>
              ))}
              <li className="ml-[6px] h-px w-[92px] bg-linear-to-r from-[#ccc] via-[#9aa0b5] to-[#ddd]" />
              <li className="pt-2"><a href="#" className="flex items-center gap-1"><Bullet />View All</a></li>
            </ul>
            <div className="pt-[26px]"><SectionHead title="Online Resources" /></div>
          </div>
          <div className="flex h-[17px] shrink-0 items-center bg-[#efefef] pr-[3px] pl-2 text-[#555]">
            <Icon n="left" c="size-[15px]" />
            <div className="mx-0.5 h-[15px] flex-1 bg-[#cbcbcb]" />
            <Icon n="right" c="size-[15px]" />
          </div>
        </div>
        <div className="flex w-[15px] shrink-0 flex-col items-center bg-[#efefef] text-[#555]">
          <span className="flex h-[26px] items-center pt-1.5"><Icon n="up" c="size-[14px]" /></span>
          <div className="h-[429px] w-full bg-[#cbcbcb]" />
          <span className="mt-auto mb-7"><Icon n="down" c="size-[14px]" /></span>
        </div>
      </div>
    </aside>
  );
}

export default function App() {
  return (
    <div className="flex h-screen flex-col overflow-hidden bg-[#f7f7f7] font-['Open_Sans','Noto_Sans',sans-serif] text-[11px] leading-4 text-[#1e1e1e]">
      <TitleBar />
      <Ribbon />
      <div className="flex min-h-0 flex-1">
        <Workspace />
        <Resources />
      </div>
      <footer className="flex h-[17px] shrink-0 items-end border-b border-[#222] leading-[15px]">
        <span className="flex-1 pl-px">SOLIDWORKS Premium 2016 x64 Edition</span>
        <span className="border-x border-[#c4c4c4] px-[3px]">Editing Part</span>
        <button className="ml-3 flex items-center gap-[18px] border-l border-[#c4c4c4] pl-7">
          Custom
          <span className="rotate-180"><Caret /></span>
        </button>
        <span className="mr-0.5 ml-[52px]"><Icon n="tag" c="size-[13px]" /></span>
      </footer>
    </div>
  );
}
